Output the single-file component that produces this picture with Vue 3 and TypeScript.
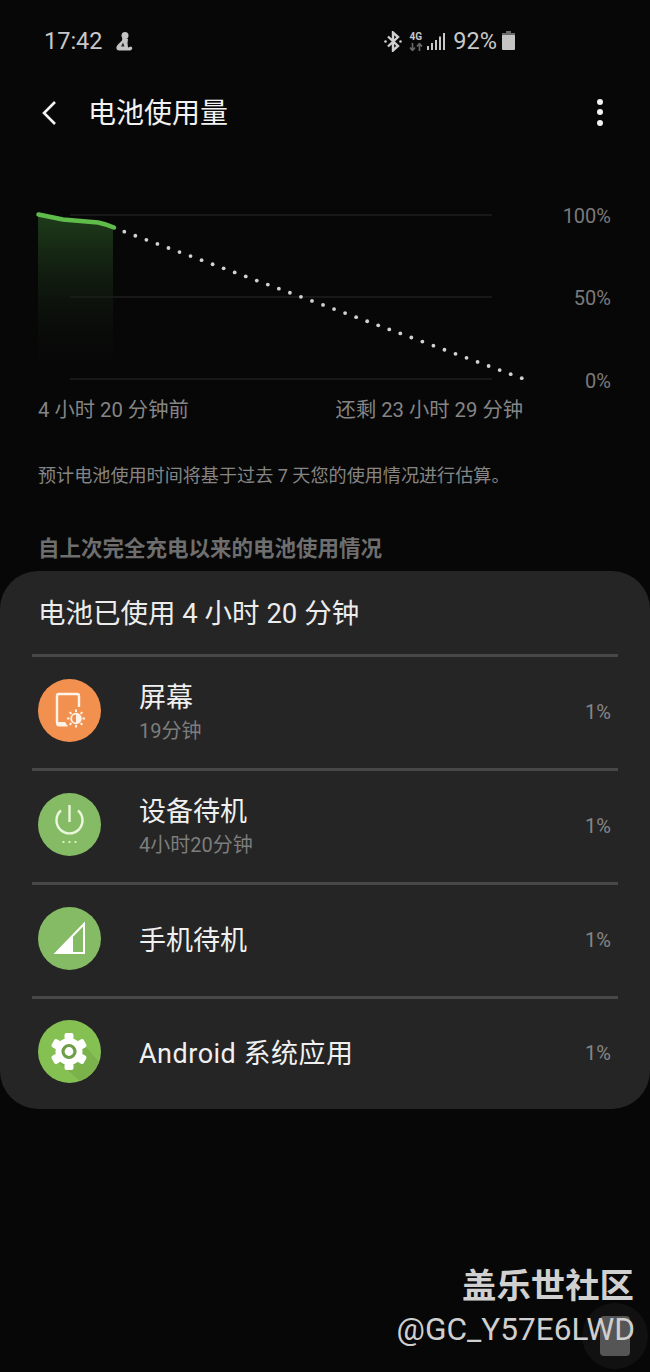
<script setup lang="ts">
interface Row { key: string; title: string; sub?: string; pct: string; wide?: boolean; }
const rows: Row[] = [
  { key: 'screen', title: '屏幕', sub: '19分钟', pct: '1%' },
  { key: 'power', title: '设备待机', sub: '4小时20分钟', pct: '1%' },
  { key: 'signal', title: '手机待机', pct: '1%' },
  { key: 'gear', title: 'Android 系统应用', pct: '1%', wide: true },
];
const dots = Array.from({ length: 37 }, (_, i) => ({ x: 124.3 + i * 11.04, y: 231.7 + i * 4.07 }));
const gridLines = [215, 297, 379];
const axis = [
  { y: 223, t: '100%' },
  { y: 305, t: '50%' },
  { y: 388, t: '0%' },
];
const teeth = [0, 60, 120, 180, 240, 300];
const rays = [0, 45, 90, 135, 180, 225, 270, 315];
</script>

<template>
  <div class="page">
    <div class="status">
      <div class="status-left">
        <span>17:42</span>
        <svg class="person" width="18" height="20" viewBox="0 0 18 20">
          <circle cx="10" cy="4.500" r="3.500" fill="#c4c4c4" />
          <path d="M7.500 6.500L7 9.500 3 13.500C.5 16 1 19 4 19.500H15C17.500 19 18 16.500 16 15.500L13 16.500 12.500 12 13 8z" fill="#c4c4c4" />
          <path d="M8 11.500L6 15.500h3.500z" fill="#2a2a2a" />
        </svg>
      </div>
      <div class="status-right">
        <svg width="18" height="21" viewBox="0 0 18 21" class="bt">
          <path d="M4 5.500l10 9.500-5 4.500V1.500l5 4.500-10 9.500" fill="none" stroke="#d0d0d0" stroke-width="2.400" />
          <circle cx="1.500" cy="10.500" r="1.300" fill="#d0d0d0" />
          <circle cx="16.500" cy="10.500" r="1.300" fill="#d0d0d0" />
        </svg>
        <div class="net">
          <span class="fourg">4G</span>
          <svg width="14" height="8" viewBox="0 0 14 8">
            <path d="M3.500 0v7M1 4.500l2.500 3 2.500-3M10.500 8V1M8 3.500l2.500-3 2.500 3" fill="none" stroke="#666" stroke-width="1.700" />
          </svg>
        </div>
        <svg width="18" height="17" viewBox="0 0 18 17" class="bars">
          <rect x="0" y="13" width="2" height="4" fill="#c8c8c8" />
          <rect x="4" y="10" width="2" height="7" fill="#c8c8c8" />
          <rect x="8" y="7" width="2" height="10" fill="#c8c8c8" />
          <rect x="12" y="3.500" width="2" height="13.500" fill="#c8c8c8" />
          <rect x="16" y="0" width="2" height="17" fill="#c8c8c8" />
        </svg>
        <span class="pct-top">92%</span>
        <svg width="13" height="19" viewBox="0 0 13 19" class="batt">
          <rect x="4" y="0" width="5" height="3" fill="#6a6a6a" />
          <rect x="0" y="2" width="13" height="3" fill="#6a6a6a" />
          <rect x="0" y="4" width="13" height="15" rx="1" fill="#c4c4c4" />
        </svg>
      </div>
    </div>

    <header class="bar">
      <svg class="back" width="16" height="26" viewBox="0 0 16 26">
        <path d="M14 2L3 13l11 11" fill="none" stroke="#f2f2f2" stroke-width="2.600" />
      </svg>
      <h1 class="title">电池使用量</h1>
      <div class="menu"><i></i><i></i><i></i></div>
    </header>

    <svg class="chart" width="650" height="205" viewBox="0 190 650 205">
      <defs>
        <linearGradient id="gfill" x1="0" y1="0" x2="0" y2="1">
          <stop offset="0" stop-color="#1f3d1b" />
          <stop offset="1" stop-color="#0a0a0a" stop-opacity="0" />
        </linearGradient>
      </defs>
      <line v-for="y in gridLines" :key="y" x1="70" x2="492" :y1="y" :y2="y" stroke="#1f1f1f" stroke-width="1.500" />
      <path d="M38 214L63 219.500Q80 221 98 222.500Q106 224 113 227.500V375H38Z" fill="url(#gfill)" />
      <path d="M38.500 214.500L63 219.500Q80 221 98 222.500Q106 224 114 227.500" fill="none" stroke="#5fbb4a" stroke-width="4.500" stroke-linecap="round" />
      <circle v-for="(d, i) in dots" :key="i" :cx="d.x" :cy="d.y" r="1.900" fill="#d2d2d2" />
      <text v-for="a in axis" :key="a.t" x="611" :y="a.y" text-anchor="end" class="axis">{{ a.t }}</text>
    </svg>

    <div class="range">
      <span>4 小时 20 分钟前</span>
      <span>还剩 23 小时 29 分钟</span>
    </div>

    <p class="note">预计电池使用时间将基于过去 7 天您的使用情况进行估算。</p>
    <h2 class="section">自上次完全充电以来的电池使用情况</h2>

    <section class="card">
      <div class="card-title">电池已使用 4 小时 20 分钟</div>
      <div v-for="r in rows" :key="r.key" class="row">
        <svg class="ic" width="63" height="63" viewBox="0 0 63 63">
          <template v-if="r.key === 'screen'">
            <circle cx="31.500" cy="31.500" r="31.500" fill="#f2914f" />
            <path d="M41 28V17a2 2 0 0 0-2-2H21a2 2 0 0 0-2 2v27" fill="none" stroke="#fff3e8" stroke-width="2.400" />
            <path d="M18 43h9l3 4.500H21a3 3 0 0 1-3-3z" fill="#fff3e8" />
            <circle cx="38" cy="39.500" r="9.500" fill="#f2914f" />
            <circle cx="38" cy="39.500" r="4.800" fill="none" stroke="#fff3e8" stroke-width="1.800" />
            <path d="M38 35a4.500 4.500 0 0 1 0 9z" fill="#fff3e8" />
            <line v-for="a in rays" :key="a" x1="38" y1="30.500" x2="38" y2="33" stroke="#fff3e8" stroke-width="2" :transform="`rotate(${a} 38 39.500)`" />
          </template>
          <template v-else-if="r.key === 'power'">
            <circle cx="31.500" cy="31.500" r="31.500" fill="#85bb65" />
            <path d="M23 17.500a13 13 0 1 0 17 0" fill="none" stroke="#eaf7dd" stroke-width="2.400" />
            <line x1="31.500" y1="12" x2="31.500" y2="29" stroke="#eaf7dd" stroke-width="2.400" />
            <circle cx="25.500" cy="49" r="1.100" fill="#eaf7dd" />
            <circle cx="31.500" cy="49" r="1.100" fill="#eaf7dd" />
            <circle cx="37.500" cy="49" r="1.100" fill="#eaf7dd" />
          </template>
          <template v-else-if="r.key === 'signal'">
            <circle cx="31.500" cy="31.500" r="31.500" fill="#85bb65" />
            <path d="M18 46L46 17V46z" fill="none" stroke="#fff" stroke-width="2" />
            <path d="M16 47L35 28V47z" fill="#fff" />
          </template>
          <template v-else>
            <circle cx="31.500" cy="31.500" r="31.500" fill="#85c052" />
            <path d="M42 20L61 42A31.500 31.500 0 0 1 42 61L20 42z" fill="#76a947" opacity=".6" />
            <circle cx="31" cy="31.500" r="13.500" fill="#fff" />
            <rect v-for="a in teeth" :key="a" x="26.500" y="13" width="9" height="7" rx="2" fill="#fff" :transform="`rotate(${a} 31 31.500)`" />
            <circle cx="31" cy="31.500" r="6" fill="#fff" stroke="#6f9e4a" stroke-width="3.200" />
          </template>
        </svg>
        <div class="text">
          <div class="row-title" :class="{ wide: r.wide }">{{ r.title }}</div>
          <div v-if="r.sub" class="row-sub">{{ r.sub }}</div>
        </div>
        <div class="pct">{{ r.pct }}</div>
      </div>
    </section>

    <div class="overlay">
      <div class="float"><div class="float-sq"></div></div>
      <div class="wm-a">盖乐世社区</div>
      <div class="wm-b">@GC_Y57E6LWD</div>
    </div>
  </div>
</template>

<style>
html, body { margin: 0; background: #070707; }
</style>

<style scoped>
.page {
  position: relative;
  width: 650px;
  height: 1372px;
  overflow: hidden;
  background: #070707;
  font-family: Roboto, "Noto Sans CJK SC", sans-serif;
  color: #fff;
}
.status {
  height: 82px;
  box-sizing: border-box;
  padding: 0 135px 0 44px;
  display: flex;
  align-items: center;
  justify-content: space-between;
  color: #c8c8c8;
  font-size: 23.500px;
}
.status-left { display: flex; align-items: center; gap: 12px; }
.status-right { display: flex; align-items: center; }
.bt { margin-right: 6px; }
.net { display: flex; flex-direction: column; align-items: center; width: 15px; margin-right: 4px; gap: 1px; }
.fourg { font-size: 10px; line-height: 10px; font-weight: 700; color: #c8c8c8; }
.bars { margin-right: 8px; margin-top: 1px; }
.pct-top { margin-right: 5px; }
.batt { margin-top: -1px; }
.bar {
  height: 62px;
  display: flex;
  align-items: center;
  padding: 0 47px 0 41px;
}
.back { margin-right: 31px; }
.title {
  margin: -4px 0 0;
  flex: 1;
  font-size: 28px;
  font-weight: 400;
  color: #f2f2f2;
}
.menu { display: flex; flex-direction: column; gap: 4.500px; margin-top: -2px; }
.menu i { display: block; width: 6px; height: 6px; border-radius: 50%; background: #f2f2f2; }
.chart { display: block; margin-top: 46px; }
.axis { font-size: 20px; fill: #7a7a7a; }
.range {
  height: 30px;
  line-height: 30px;
  padding: 0 127px 0 38px;
  display: flex;
  justify-content: space-between;
  font-size: 20.300px;
  color: #858585;
}
.note {
  margin: 36px 0 0;
  padding-left: 38px;
  line-height: 30px;
  font-size: 18.100px;
  color: #858585;
}
.section {
  margin: 43px 0 0;
  padding-left: 38px;
  line-height: 30px;
  font-size: 21.500px;
  font-weight: 700;
  color: #6e6e6e;
}
.card {
  margin-top: 7px;
  height: 538px;
  border-radius: 38px;
  background: #252525;
}
.card-title {
  height: 83px;
  line-height: 85px;
  padding-left: 38px;
  font-size: 27.500px;
  color: #ececec;
}
.row {
  margin: 0 32px;
  height: 114px;
  box-sizing: border-box;
  border-top: 3px solid #484848;
  padding: 0 7px 4px 6px;
  display: flex;
  align-items: center;
}
.row:last-child { height: 112px; }
.ic { flex: none; margin-right: 38px; }
.text { flex: 1; padding-top: 4px; }
.row-title { font-size: 27px; line-height: 34px; color: #f0f0f0; }
.row-title.wide { letter-spacing: .5px; }
.row-sub { font-size: 20px; line-height: 28px; margin-top: 2px; color: #7d7d7d; }
.pct { font-size: 20px; color: #858585; margin-top: 2px; }
.overlay {
  position: absolute;
  right: 0;
  bottom: 0;
  width: 300px;
  height: 110px;
  text-align: right;
}
.float {
  position: absolute;
  left: 232px;
  top: 41px;
  width: 66px;
  height: 66px;
  border-radius: 50%;
  background: #111;
  display: flex;
  align-items: center;
  justify-content: center;
}
.float-sq { width: 30px; height: 40px; border-radius: 4px; background: #555; }
.wm-a {
  position: absolute;
  right: 16px;
  top: 1px;
  font-size: 34.400px;
  line-height: 46px;
  font-weight: 700;
  color: #d0d0d0;
}
.wm-b {
  position: absolute;
  right: 15px;
  top: 49px;
  font-size: 31.600px;
  line-height: 38px;
  color: #cfcfcf;
}
</style>
